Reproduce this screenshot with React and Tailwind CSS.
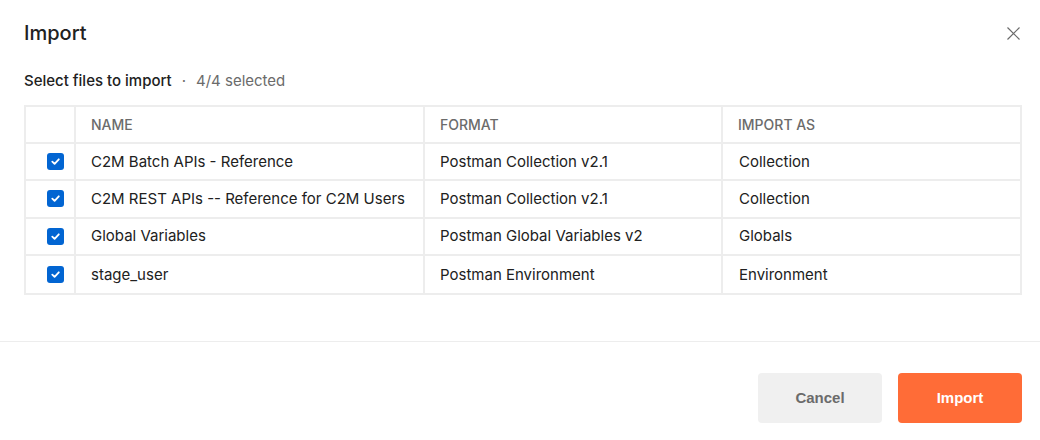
import React, { useState } from 'react';

const rows = [
  { name: 'C2M Batch APIs - Reference', format: 'Postman Collection v2.1', as: 'Collection' },
  { name: 'C2M REST APIs -- Reference for C2M Users', format: 'Postman Collection v2.1', as: 'Collection' },
  { name: 'Global Variables', format: 'Postman Global Variables v2', as: 'Globals' },
  { name: 'stage_user', format: 'Postman Environment', as: 'Environment' },
];

const Checkbox = ({ checked, onClick }) => (
  <button
    onClick={onClick}
    className={`w-[17px] h-[17px] rounded-[3px] flex items-center justify-center ${
      checked ? 'bg-[#0265d2]' : 'bg-white border border-[#a6a6a6]'
    }`}
  >
    {checked && (
      <svg width="11" height="11" viewBox="0 0 12 12" fill="none">
        <path d="M2.5 6.2 L5 8.6 L9.6 3.6" stroke="white" strokeWidth="2" strokeLinecap="round" strokeLinejoin="round" />
      </svg>
    )}
  </button>
);

const App = () => {
  const [selected, setSelected] = useState([true, true, true, true]);

  const toggle = (i) => {
    const next = [...selected];
    next[i] = !next[i];
    setSelected(next);
  };

  const count = selected.filter(Boolean).length;

  return (
    <div className="w-[1040px] h-[440px] bg-white font-['Inter',sans-serif] text-[#212121]">
      <div className="pl-6 pr-[18px] pt-[19px]">
        <div className="flex items-center justify-between">
          <h1 className="text-[20px] leading-[28px] font-medium">Import</h1>
          <button className="w-6 h-6 flex items-center justify-center mr-[-3px]">
            <svg width="13" height="13" viewBox="0 0 13 13">
              <path d="M0.5 0.5 L12.5 12.5 M12.5 0.5 L0.5 12.5" stroke="#6b6b6b" strokeWidth="1.2" />
            </svg>
          </button>
        </div>

        <div className="mt-[24px] text-[15px] leading-[20px] flex items-center">
          <span className="font-medium">Select files to import</span>
          <span className="text-[#6b6b6b] mx-[10px]">·</span>
          <span className="text-[#6b6b6b]">{count}/4 selected</span>
        </div>

        <div className="mt-[14px] border-2 border-[#ededed] text-[15px]">
          <div className="grid grid-cols-[50px_349px_298px_1fr] h-[37px] border-b-2 border-[#ededed] text-[14px] font-medium text-[#6b6b6b]">
            <div className="border-r-2 border-[#ededed]"></div>
            <div className="border-r-2 border-[#ededed] pl-[15px] flex items-center">NAME</div>
            <div className="border-r-2 border-[#ededed] pl-[15px] flex items-center">FORMAT</div>
            <div className="pl-[15px] flex items-center">IMPORT AS</div>
          </div>
          {rows.map((row, i) => (
            <div
              key={row.name}
              className={`grid grid-cols-[50px_349px_298px_1fr] h-[37.3px] ${
                i < rows.length - 1 ? 'border-b-2 border-[#ededed]' : ''
              }`}
            >
              <div className="border-r-2 border-[#ededed] flex items-center pl-[21px]">
                <Checkbox checked={selected[i]} onClick={() => toggle(i)} />
              </div>
              <div className="border-r-2 border-[#ededed] pl-[15px] pt-[1px] flex items-center">{row.name}</div>
              <div className="border-r-2 border-[#ededed] pl-[15px] pt-[1px] flex items-center">{row.format}</div>
              <div className="pl-[16px] pt-[1px] flex items-center">{row.as}</div>
            </div>
          ))}
        </div>
      </div>

      <div className="mt-[46px] border-t border-[#ededed] pl-6 pr-[18px] pt-[31px] flex justify-end gap-4">
        <button className="w-[124px] h-[50px] rounded-[4px] bg-[#f0f0f0] text-[#6b6b6b] text-[15px] font-bold font-['Liberation_Sans',sans-serif]">
          Cancel
        </button>
        <button className="w-[124px] h-[50px] rounded-[4px] bg-[#ff6c37] text-white text-[15px] font-bold font-['Liberation_Sans',sans-serif]">
          Import
        </button>
      </div>
    </div>
  );
};

export default App;
